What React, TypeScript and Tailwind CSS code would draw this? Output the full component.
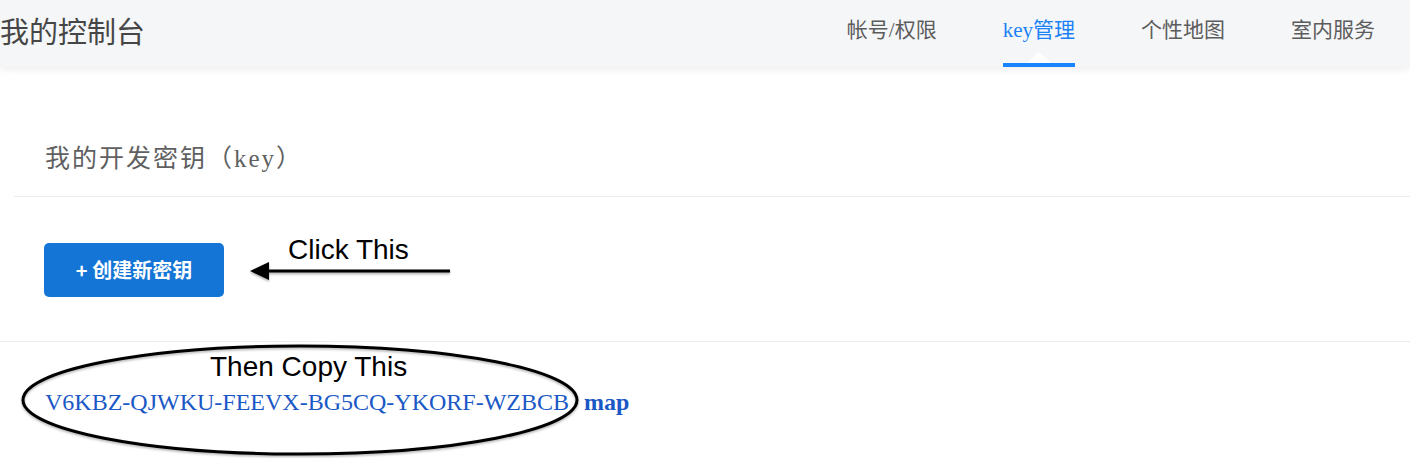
import React from "react";

const cjk = '"Noto Sans CJK SC", "Noto Sans", sans-serif';
const mixed = '"Liberation Serif", "Noto Sans CJK SC", serif';

export default function App() {
  const tabs = ["帐号/权限", "key管理", "个性地图", "室内服务"];
  return (
    <div className="w-[1410px] h-[463px] bg-white overflow-hidden relative" style={{ fontFamily: cjk }}>
      <header className="h-[67px] bg-[#f5f6f8] flex items-stretch justify-between relative z-10 shadow-[0_2px_8px_rgba(0,0,0,0.08)]">
        <div className="flex items-center pb-[6px] text-[29px] text-[#464646] leading-none">我的控制台</div>
        <nav className="flex items-stretch gap-[66px] pr-[35px]" style={{ fontFamily: mixed }}>
          {tabs.map((t, i) => (
            <div key={t} className="relative flex items-center pb-[7px]">
              <span
                className={
                  "text-[21px] leading-none " +
                  (i === 1 ? "text-[#1a82f6]" : "text-[#5c5c5c]")
                }
              >
                {t}
              </span>
              {i === 1 && (
                <>
                  <div className="absolute left-0 right-0 bottom-0 h-[4px] bg-[#1685ff]" />
                  <svg className="absolute bottom-[4px] left-[24px]" width="24" height="11" viewBox="0 0 24 11">
                    <polygon points="0,11 12,0 24,11" fill="#ffffff" />
                  </svg>
                </>
              )}
            </div>
          ))}
        </nav>
      </header>

      <div className="pl-[14px] mt-[53px]">
        <div className="h-[77px] flex items-center pl-[31px] border-b border-[#ececec]">
          <span className="text-[25px] text-[#606060] leading-none tracking-[2px]" style={{ fontFamily: mixed }}>
            我的开发密钥（key）
          </span>
        </div>
      </div>

      <div className="h-[145px] pt-[46px] pl-[44px] flex items-start gap-[25px] border-b border-[#ececec]">
        <button className="w-[180px] h-[54px] rounded-[5px] bg-[#1475d6] text-white text-[20px] font-bold flex items-center justify-center leading-none">
          + 创建新密钥
        </button>
        <div className="relative w-[205px] h-[54px]">
          <span
            className="absolute left-[39px] top-[-7px] text-[28px] text-black leading-none"
            style={{ fontFamily: '"Liberation Sans", Arial, sans-serif' }}
          >
            Click This
          </span>
          <svg className="absolute left-0 top-[17px]" width="205" height="24" viewBox="0 0 205 24">
            <defs>
              <filter id="sh" x="-10%" y="-50%" width="120%" height="200%">
                <feDropShadow dx="0" dy="1.5" stdDeviation="1.2" floodColor="#000" floodOpacity="0.35" />
              </filter>
            </defs>
            <g filter="url(#sh)">
              <line x1="18" y1="11" x2="201" y2="11" stroke="#000" strokeWidth="3" />
              <polygon points="1,11 20,2 20,20" fill="#000" />
            </g>
          </svg>
        </div>
      </div>

      <div className="relative pl-[45px] pt-[11px]">
        <div
          className="pl-[165px] text-[28px] text-black leading-none"
          style={{ fontFamily: '"Liberation Sans", Arial, sans-serif' }}
        >
          Then Copy This
        </div>
        <div
          className="mt-[9px] flex items-baseline gap-[15px] text-[24px] leading-none"
          style={{ fontFamily: '"Liberation Serif", "Times New Roman", serif' }}
        >
          <span className="text-[#1a58c6]">V6KBZ-QJWKU-FEEVX-BG5CQ-YKORF-WZBCB</span>
          <span className="text-[#1a58c6] font-bold">map</span>
        </div>
        <svg className="absolute left-[20px] top-[1px] pointer-events-none" width="562" height="115" viewBox="0 0 562 115">
          <defs>
            <filter id="sh2" x="-5%" y="-10%" width="110%" height="120%">
              <feDropShadow dx="0" dy="1.5" stdDeviation="1.2" floodColor="#000" floodOpacity="0.3" />
            </filter>
          </defs>
          <ellipse cx="280" cy="57" rx="277" ry="54" fill="none" stroke="#000" strokeWidth="3" filter="url(#sh2)" />
        </svg>
      </div>
    </div>
  );
}
